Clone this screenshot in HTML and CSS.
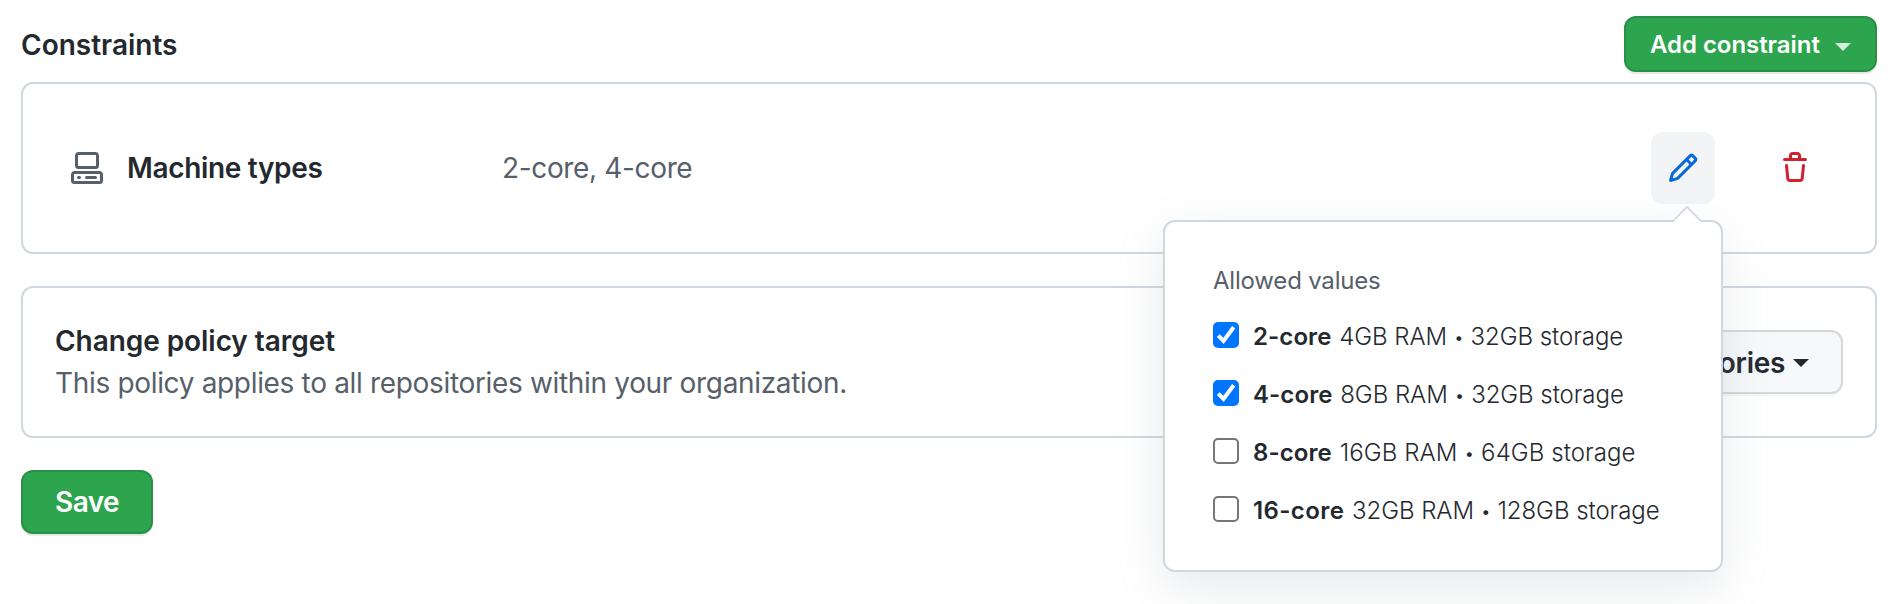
FILE: index.html
```html
<!DOCTYPE html>
<html lang="en">
<head>
<meta charset="utf-8">
<title>Constraints</title>
<link rel="stylesheet" href="styles.css">
</head>
<body>
<main class="page">
  <header class="head">
    <h2 class="title">Constraints</h2>
    <button class="btn btn-primary btn-add"><span>Add constraint</span><span class="caret"></span></button>
  </header>

  <section class="box constraint">
    <svg class="icon icon-machine" viewBox="0 0 16 16"><path fill-rule="evenodd" d="M2 1.75C2 .784 2.784 0 3.75 0h8.5C13.216 0 14 .784 14 1.75v5a1.75 1.75 0 01-1.75 1.75h-8.5A1.75 1.75 0 012 6.75v-5zm1.75-.25a.25.25 0 00-.25.25v5c0 .138.112.25.25.25h8.5a.25.25 0 00.25-.25v-5a.25.25 0 00-.25-.25h-8.5zM0 11.25c0-.966.784-1.75 1.75-1.75h12.5c.966 0 1.75.784 1.75 1.75v3A1.75 1.75 0 0114.25 16H1.75A1.75 1.75 0 010 14.25v-3zM1.75 11a.25.25 0 00-.25.25v3c0 .138.112.25.25.25h12.5a.25.25 0 00.25-.25v-3a.25.25 0 00-.25-.25H1.75z"/><path d="M3 12.75a.75.75 0 01.75-.75h.5a.75.75 0 010 1.5h-.5a.75.75 0 01-.75-.75zm4 0a.75.75 0 01.75-.75h4.5a.75.75 0 010 1.5h-4.5a.75.75 0 01-.75-.75z"/></svg>
    <strong class="name">Machine types</strong>
    <span class="value">2-core, 4-core</span>
    <div class="edit">
      <button class="icon-btn icon-btn-edit" aria-label="Edit"><svg class="icon" viewBox="0 0 16 16"><path fill-rule="evenodd" d="M11.013 1.427a1.75 1.75 0 012.474 0l1.086 1.086a1.75 1.75 0 010 2.474l-8.61 8.61c-.21.21-.47.364-.756.445l-3.251.93a.75.75 0 01-.927-.928l.929-3.25a1.75 1.75 0 01.445-.758l8.61-8.61zm1.414 1.06a.25.25 0 00-.354 0L10.811 3.75l1.439 1.44 1.263-1.263a.25.25 0 000-.354l-1.086-1.086zM11.189 6.25L9.75 4.81l-6.286 6.287a.25.25 0 00-.064.108l-.558 1.953 1.953-.558a.249.249 0 00.108-.064l6.286-6.286z"/></svg></button>
      <div class="popover">
        <svg class="pointer" viewBox="0 0 32 17"><path class="pointer-fill" d="M1.5 17L16 2l14.5 15z"/><path class="pointer-line" d="M1.5 16.500L16 2l14.500 14.500"/></svg>
        <p class="legend">Allowed values</p>
        <label class="option"><span class="check checked"><svg viewBox="0 0 26 26"><path d="M5.300 13.600l5.200 5.400L20.700 5.200"/></svg></span><span class="spec"><b>2-core</b> 4GB RAM <span class="dot">•</span> 32GB storage</span></label>
        <label class="option"><span class="check checked"><svg viewBox="0 0 26 26"><path d="M5.300 13.600l5.200 5.400L20.700 5.200"/></svg></span><span class="spec"><b>4-core</b> 8GB RAM <span class="dot">•</span> 32GB storage</span></label>
        <label class="option"><span class="check"></span><span class="spec spec-loose"><b>8-core</b> 16GB RAM <span class="dot">•</span> 64GB storage</span></label>
        <label class="option"><span class="check"></span><span class="spec"><b class="wide">16-core</b> 32GB RAM <span class="dot">•</span> 128GB storage</span></label>
      </div>
    </div>
    <button class="icon-btn icon-btn-delete" aria-label="Delete"><svg class="icon" viewBox="0 0 16 16"><path fill-rule="evenodd" d="M6.5 1.75a.25.25 0 01.25-.25h2.5a.25.25 0 01.25.25V3h-3V1.75zm4.5 0V3h2.25a.75.75 0 010 1.5H2.75a.75.75 0 010-1.5H5V1.75C5 .784 5.784 0 6.75 0h2.5C10.216 0 11 .784 11 1.75zM4.496 6.675a.75.75 0 10-1.492.15l.66 6.6A1.75 1.75 0 005.405 15h5.19c.9 0 1.652-.681 1.741-1.576l.66-6.6a.75.75 0 00-1.492-.149l-.66 6.6a.25.25 0 01-.249.225h-5.19a.25.25 0 01-.249-.225l-.66-6.6z"/></svg></button>
  </section>

  <section class="box target">
    <div class="target-text">
      <strong class="target-title">Change policy target</strong>
      <span class="target-desc">This policy applies to all repositories within your organization.</span>
    </div>
    <button class="btn btn-select"><span>All repositories</span><span class="caret"></span></button>
  </section>

  <button class="btn btn-primary btn-save">Save</button>
</main>
</body>
</html>
```
FILE: styles.css
```css
* { box-sizing: border-box; }

body {
  margin: 0;
  background: #fff;
  color: #24292f;
  font-family: Inter, "Liberation Sans", sans-serif;
  font-size: 28px;
  line-height: 42px;
}

.page {
  display: flex;
  flex-direction: column;
  align-items: stretch;
  height: 604px;
  padding: 16px 17px 0 21px;
  overflow: hidden;
}

.head {
  display: flex;
  align-items: center;
  justify-content: space-between;
  height: 56px;
}

.title {
  margin: 0;
  padding-top: 2px;
  font-size: 28px;
  font-weight: 600;
}

.btn {
  display: flex;
  align-items: center;
  height: 64px;
  border: 2px solid rgba(27, 31, 36, 0.15);
  border-radius: 12px;
  font: 600 28px/40px Inter, "Liberation Sans", sans-serif;
  white-space: nowrap;
}

.btn-primary {
  background: #2da44e;
  color: #fff;
  box-shadow: 0 2px 0 rgba(27, 31, 36, 0.1);
}

.btn-add {
  justify-content: space-between;
  width: 253px;
  height: 56px;
  padding: 2px 24px 0;
  font-size: 24px;
  letter-spacing: -0.05px;
}

.caret {
  border: 8px solid transparent;
  border-top-color: currentColor;
  border-bottom: 0;
}

.btn-add .caret { margin-top: 3px; opacity: 0.8; }

.box {
  display: flex;
  align-items: center;
  border: 2px solid #d0d7de;
  border-radius: 12px;
}

.constraint {
  height: 172px;
  margin-top: 10px;
  padding: 0 48px;
}

.icon {
  display: block;
  flex: none;
  width: 32px;
  height: 32px;
  fill: currentColor;
}

.icon-machine { color: #57606a; }

.name {
  width: 375px;
  margin-left: 24px;
  font-weight: 600;
  letter-spacing: -0.33px;
}

.value {
  color: #57606a;
  letter-spacing: -0.35px;
}

.edit {
  position: relative;
  margin-left: auto;
}

.icon-btn {
  display: flex;
  align-items: center;
  justify-content: center;
  width: 64px;
  height: 72px;
  padding: 0;
  border: 0;
  border-radius: 12px;
  background: none;
}

.icon-btn-edit { background: #f3f4f6; color: #0969da; }
.icon-btn-delete { margin-left: 48px; color: #cf222e; }

.popover {
  position: absolute;
  top: 88px;
  right: -8px;
  width: 560px;
  height: 352px;
  padding: 41px 48px 35px;
  border: 2px solid #d0d7de;
  border-radius: 12px;
  background: #fff;
  box-shadow: 0 16px 48px rgba(140, 149, 159, 0.2);
  font-size: 24px;
  line-height: 36px;
  white-space: nowrap;
}

.pointer {
  position: absolute;
  top: -17px;
  right: 18px;
  width: 32px;
  height: 17px;
}

.pointer-fill { fill: #fff; }
.pointer-line { fill: none; stroke: #d0d7de; stroke-width: 1.6; }

.legend {
  margin: 0 0 8px;
  color: #57606a;
  letter-spacing: -0.2px;
}

.option {
  display: flex;
  align-items: center;
  gap: 14px;
  height: 58px;
}

.spec {
  padding-top: 2px;
  font-weight: 350;
  letter-spacing: -0.05px;
}

.spec-loose { letter-spacing: 0.08px; }

.option b {
  margin-right: 1px;
  font-weight: 640;
  letter-spacing: 0.1px;
}

.option .wide { letter-spacing: 0.4px; }

.dot {
  display: inline-block;
  width: 10px;
  font-size: 18px;
  line-height: 18px;
  text-align: center;
  vertical-align: 1px;
}

.check {
  width: 26px;
  height: 26px;
  margin-top: -3px;
  border: 2px solid #767676;
  border-radius: 5px;
}

.checked { border: 0; background: #0075ff; }
.check svg { display: block; fill: none; stroke: #fff; stroke-width: 4; }

.target {
  justify-content: space-between;
  height: 152px;
  margin-top: 32px;
  padding: 0 32px;
}

.target-text { display: flex; flex-direction: column; }

.target-title {
  font-weight: 600;
  letter-spacing: -0.06px;
}

.target-desc {
  color: #57606a;
  letter-spacing: -0.33px;
}

.btn-select {
  gap: 8px;
  padding: 2px 32px 0;
  background: #f6f8fa;
  color: #24292f;
  letter-spacing: -0.3px;
  box-shadow: 0 2px 0 rgba(27, 31, 36, 0.04);
}

.btn-save {
  align-self: flex-start;
  justify-content: center;
  width: 132px;
  margin-top: 32px;
  letter-spacing: -0.6px;
}
```
